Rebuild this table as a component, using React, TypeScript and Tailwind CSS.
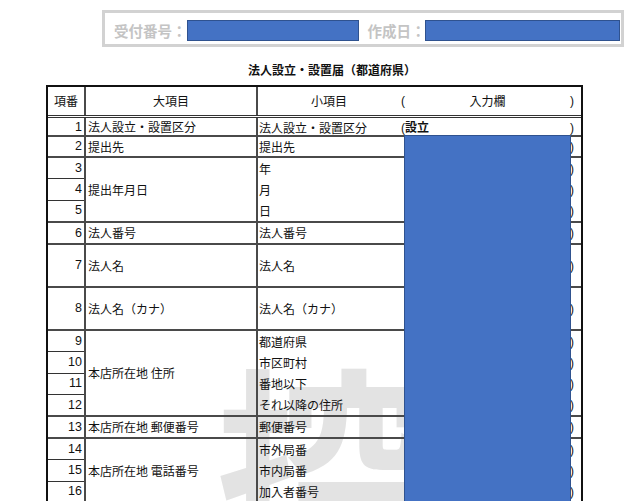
import React from "react";

type Group = {
  nums: number[];
  label: string;
  subs: string[];
  h: number;
};

const groups: Group[] = [
  { nums: [1], label: "法人設立・設置区分", subs: ["法人設立・設置区分"], h: 19 },
  { nums: [2], label: "提出先", subs: ["提出先"], h: 21 },
  { nums: [3, 4, 5], label: "提出年月日", subs: ["年", "月", "日"], h: 65 },
  { nums: [6], label: "法人番号", subs: ["法人番号"], h: 22 },
  { nums: [7], label: "法人名", subs: ["法人名"], h: 43 },
  { nums: [8], label: "法人名（カナ）", subs: ["法人名（カナ）"], h: 43 },
  {
    nums: [9, 10, 11, 12],
    label: "本店所在地 住所",
    subs: ["都道府県", "市区町村", "番地以下", "それ以降の住所"],
    h: 86,
  },
  { nums: [13], label: "本店所在地 郵便番号", subs: ["郵便番号"], h: 22 },
  {
    nums: [14, 15, 16],
    label: "本店所在地 電話番号",
    subs: ["市外局番", "市内局番", "加入者番号"],
    h: 65,
  },
];

const jp = "font-['Noto_Sans_CJK_JP','Noto_Sans_CJK_SC',sans-serif]";

function GroupRow({ g, gi }: { g: Group; gi: number }) {
  return (
    <div
      className="flex border-b-2 border-[#4a4a4a]"
      style={{ height: g.h }}
    >
      <div className="w-[38px] flex flex-col border-r-2 border-[#4a4a4a]">
        {g.nums.map((n, i) => (
          <div
            key={n}
            className={
              "flex-1 flex items-center justify-end pr-[2px] font-['Liberation_Sans',sans-serif] text-[12.5px] text-[#111] " +
              (i < g.nums.length - 1 ? "border-b border-[#333]" : "")
            }
          >
            {n}
          </div>
        ))}
      </div>
      <div
        className={
          "w-[172px] flex items-center pl-[2px] border-r-2 border-[#4a4a4a] text-[12px] text-[#111] " +
          jp
        }
      >
        {g.label}
      </div>
      <div className="flex-1 flex flex-col">
        {g.subs.map((s, i) => (
          <div key={s} className="flex-1 flex items-center">
            <div className={"w-[142px] pl-[1px] text-[12px] text-[#111] " + jp}>{s}</div>
            <div className="flex-1 flex items-center justify-between pr-[7px] pl-[1px] text-[12px] text-[#111]">
              <span className={jp}>
                {gi === 0 && i === 0 ? (
                  <>
                    <span className="font-['Liberation_Sans',sans-serif]">(</span>
                    <span className="font-bold">設立</span>
                  </>
                ) : (
                  ""
                )}
              </span>
              <span className="font-['Liberation_Sans',sans-serif]">)</span>
            </div>
          </div>
        ))}
      </div>
    </div>
  );
}

export default function App() {
  return (
    <div className="relative w-[626px] h-[501px] overflow-hidden bg-white">
      {/* watermark */}
      <div
        className={
          "absolute left-[216px] top-[352px] text-[212px] leading-none font-bold text-[#e3e3e3] select-none " +
          jp
        }
      >
        控
      </div>

      <div className="relative flex flex-col">
        {/* top box */}
        <div className="mt-[10px] ml-[102px] w-[522px] h-[37px] border-[3px] border-[#d2d2d2] flex items-start pt-[7px] pl-[9px]">
          <span className={"text-[14.5px] leading-[21px] font-bold text-[#c4c4c4] " + jp}>
            受付番号：
          </span>
          <div className="w-[172px] h-[21px] bg-[#4472c4] border border-[#2f528f]" />
          <span className={"ml-[9px] text-[14.5px] leading-[21px] font-bold text-[#c4c4c4] " + jp}>
            作成日：
          </span>
          <div className="ml-[-1px] w-[195px] h-[21px] bg-[#4472c4] border border-[#2f528f]" />
        </div>

        {/* title */}
        <div className={"mt-[16px] pl-[248px] text-[12px] leading-[14px] font-bold text-[#111] " + jp}>
          法人設立・設置届（都道府県）
        </div>

        {/* table */}
        <div className="mt-[8px] ml-[46px] w-[537px] border-x-2 border-t-2 border-[#111]">
          <div className="flex h-[31px] border-b-[3px] border-double border-[#333]">
            <div className={"w-[38px] flex items-center justify-center border-r-2 border-[#4a4a4a] text-[12px] text-[#111] " + jp}>
              項番
            </div>
            <div className={"w-[172px] flex items-center justify-center border-r-2 border-[#4a4a4a] text-[12px] text-[#111] " + jp}>
              大項目
            </div>
            <div className={"w-[142px] flex items-center justify-center text-[12px] text-[#111] " + jp}>
              小項目
            </div>
            <div className={"flex-1 grid grid-cols-[auto_1fr_auto] items-center pl-[1px] pr-[7px] text-[12px] text-[#111] " + jp}>
              <span className="font-['Liberation_Sans',sans-serif]">(</span>
              <span className="text-center">入力欄</span>
              <span className="font-['Liberation_Sans',sans-serif]">)</span>
            </div>
          </div>
          {groups.map((g, gi) => (
            <GroupRow key={gi} g={g} gi={gi} />
          ))}
        </div>
      </div>

      {/* redaction */}
      <div className="absolute left-[404px] top-[135px] w-[167px] h-[380px] bg-[#4472c4] border border-[#2f528f]" />
    </div>
  );
}
